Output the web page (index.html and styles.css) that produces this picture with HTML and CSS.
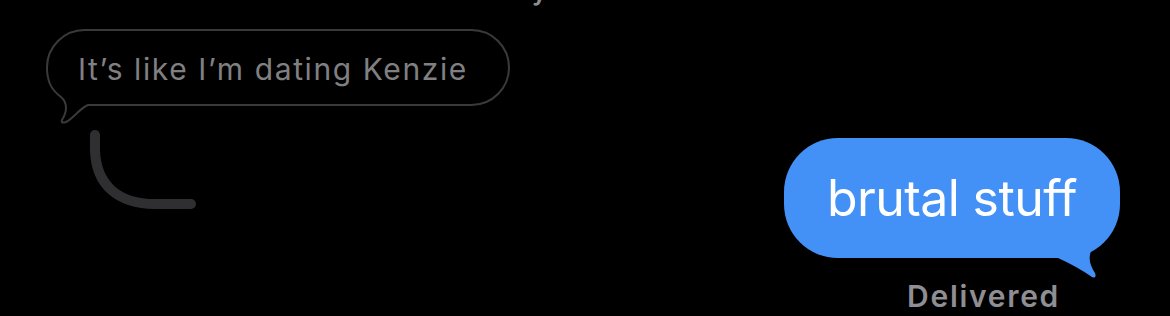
FILE: index.html
```html
<!DOCTYPE html>
<html lang="en">
<head>
    <meta charset="UTF-8">
    <meta name="viewport" content="width=device-width, initial-scale=1.0">
    <title>Messages</title>
    <link rel="stylesheet" href="styles.css">
</head>
<body>
    <div class="stamp">
        <span class="stamp-text">Today 9:41</span>
    </div>

    <!-- quoted message -->
    <div class="incoming">
        <div class="bubble-quote">
            It’s like I’m dating Kenzie
            <svg class="quote-tail" width="62" height="62" viewBox="40 64 62 62">
                <path d="M43 66 L52 66 L60 90 L75 100 L100 102 L100 112 L43 112 Z" fill="#000"/>
                <path d="M47 66 L47 70 C48 84 52 90 61 97 C68 103 67 112 62 120 C61 123 63 123 66 122 C74 118 80 108 88 105 L101 105"
                      fill="none" stroke="#3a3a3c" stroke-width="2"/>
            </svg>
        </div>
    </div>

    <div class="thread">
        <svg class="reply-line" width="110" height="84" viewBox="88 128 110 84">
            <path d="M95 135 L95 150 C96 185 118 204 155 204 L191 204"
                  fill="none" stroke="#2f2f31" stroke-width="10" stroke-linecap="round"/>
        </svg>

        <div class="outgoing">
            <div class="bubble-sent">
                brutal stuff
                <svg class="sent-tail" width="70" height="50" viewBox="1040 230 70 50">
                    <path d="M1040 238 L1040 258 L1060 258 Q1078 266 1094 277 Q1099 279 1097 273 Q1089 261 1093 251 Q1098 244 1106 238 Z" fill="#4390f6"/>
                </svg>
            </div>
            <div class="status">Delivered</div>
        </div>
    </div>
</body>
</html>
```

FILE: styles.css
```css
* {
    margin: 0;
    padding: 0;
    box-sizing: border-box;
}

body {
    font-family: Inter, "Noto Sans", sans-serif;
    background-color: #000;
    width: 1170px;
    height: 316px;
    overflow: hidden;
}

.stamp {
    height: 8px;
    overflow: hidden;
    padding-left: 470px;
}

.stamp-text {
    display: block;
    margin-top: -24px;
    font-size: 26px;
    line-height: 30px;
    font-weight: 600;
    color: #8e8e93;
}

.incoming {
    padding-left: 46px;
    margin-top: 21px;
}

.bubble-quote {
    position: relative;
    display: inline-block;
    border: 2px solid #3a3a3c;
    border-radius: 39px;
    padding: 18px 40px 15px 30px;
    font-size: 30px;
    line-height: 40px;
    letter-spacing: 1.6px;
    color: #808082;
    white-space: nowrap;
}

.quote-tail {
    position: absolute;
    left: -8px;
    top: 33px;
}

.thread {
    display: flex;
    align-items: flex-start;
}

.reply-line {
    margin-top: 22px;
    margin-left: 88px;
}

.outgoing {
    margin-left: auto;
    margin-right: 50px;
    margin-top: 32px;
    display: flex;
    flex-direction: column;
    align-items: flex-end;
}

.bubble-sent {
    position: relative;
    background: #4390f6;
    color: #fff;
    border-radius: 54px;
    padding: 29px 43px;
    font-size: 50px;
    line-height: 62px;
    letter-spacing: -0.6px;
    white-space: nowrap;
}

.sent-tail {
    position: absolute;
    left: 254px;
    top: 92px;
}

.status {
    margin-top: 21px;
    margin-right: 60px;
    font-size: 30px;
    line-height: 34px;
    font-weight: 600;
    letter-spacing: 1.7px;
    color: #8e8e93;
}
```
